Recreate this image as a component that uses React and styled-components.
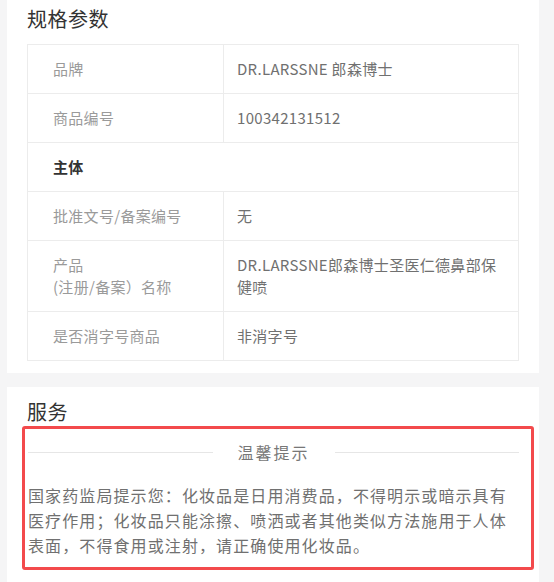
import React from "react";
import styled, { createGlobalStyle } from "styled-components";

const GlobalStyle = createGlobalStyle`
  body {
    margin: 0;
    background: #f5f5f6;
    font-family: "Noto Sans CJK SC", "Noto Sans", sans-serif;
  }
`;

const specs = [
  { label: "品牌", value: "DR.LARSSNE 郎森博士" },
  { label: "商品编号", value: "100342131512" },
  { group: "主体" },
  { label: "批准文号/备案编号", value: "无" },
  { label: ["产品", "(注册/备案）名称"], value: "DR.LARSSNE郎森博士圣医仁德鼻部保健喷" },
  { label: "是否消字号商品", value: "非消字号" },
];

const noticeLines = [
  "国家药监局提示您：化妆品是日用消费品，不得明示或暗示具有",
  "医疗作用；化妆品只能涂擦、喷洒或者其他类似方法施用于人体",
  "表面，不得食用或注射，请正确使用化妆品。",
];

export default function App() {
  return (
    <Page>
      <GlobalStyle />
      <Panel>
        <Title>规格参数</Title>
        <SpecTable>
          {specs.map((row, i) =>
            row.group ? (
              <Row key={i}>
                <GroupCell>{row.group}</GroupCell>
              </Row>
            ) : (
              <Row key={i}>
                <LabelCell>
                  {Array.isArray(row.label)
                    ? row.label.map((l) => <div key={l}>{l}</div>)
                    : row.label}
                </LabelCell>
                <ValueCell>{row.value}</ValueCell>
              </Row>
            )
          )}
        </SpecTable>
      </Panel>

      <Panel $service>
        <Title $inset>服务</Title>
        <Notice>
          <Divider>
            <Line />
            <DividerText>温馨提示</DividerText>
            <Line />
          </Divider>
          <NoticeText>
            {noticeLines.map((l) => (
              <NoticeLine key={l}>{l}</NoticeLine>
            ))}
          </NoticeText>
        </Notice>
      </Panel>
    </Page>
  );
}

const Page = styled.div`
  display: flex;
  flex-direction: column;
  gap: 14px;
  padding: 0 15px 0 7px;
`;

const Panel = styled.section`
  background: #fff;
  padding: ${(p) => (p.$service ? "11px 5px 14px 15px" : "5px 20px 12px")};
`;

const Title = styled.h2`
  margin: 0 0 ${(p) => (p.$inset ? "0" : "11px")} ${(p) => (p.$inset ? "5px" : "0")};
  font-size: 20px;
  font-weight: 400;
  line-height: 28px;
  letter-spacing: 0.5px;
  color: #333;
`;

const SpecTable = styled.div`
  display: flex;
  flex-direction: column;
  border: 1px solid #ececec;
`;

const Row = styled.div`
  display: flex;
  & + & {
    border-top: 1px solid #ececec;
  }
`;

const Cell = styled.div`
  padding: 13px 14px 13px 25px;
  font-size: 15px;
  line-height: 22px;
  letter-spacing: 0.3px;
`;

const LabelCell = styled(Cell)`
  width: 196px;
  box-sizing: border-box;
  flex-shrink: 0;
  border-right: 1px solid #ececec;
  color: #9a9a9a;
`;

const ValueCell = styled(Cell)`
  flex: 1;
  padding-left: 13px;
  color: #707070;
`;

const GroupCell = styled(Cell)`
  font-weight: 700;
  color: #333;
`;

const Notice = styled.div`
  border: 3px solid #f34a4c;
  border-radius: 3px;
  padding: 11px 12px 9px 3px;
`;

const Divider = styled.div`
  display: flex;
  align-items: center;
  gap: 25px;
  height: 24px;
`;

const Line = styled.div`
  flex: 1;
  height: 1px;
  background: #e6e6e6;
`;

const DividerText = styled.span`
  font-size: 16px;
  letter-spacing: 2px;
  color: #777;
`;

const NoticeText = styled.div`
  margin-top: 19px;
  font-size: 16px;
  line-height: 25px;
  letter-spacing: 1.1px;
  color: #707070;
`;

const NoticeLine = styled.div`
  white-space: nowrap;
`;
